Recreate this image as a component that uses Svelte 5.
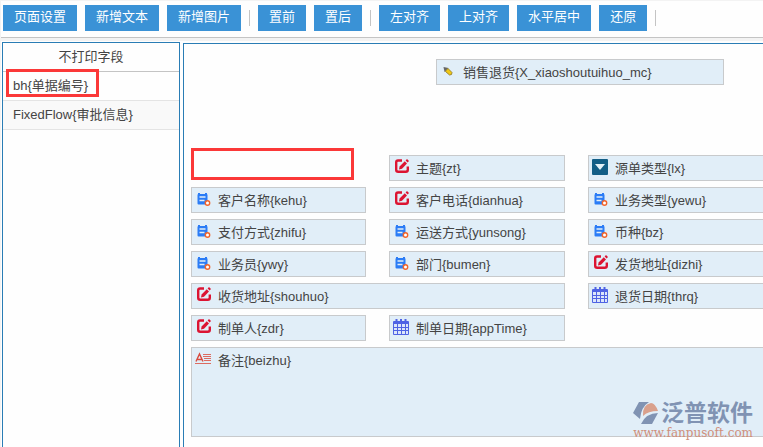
<script>
	const groups = [
		['页面设置', '新增文本', '新增图片'],
		['置前', '置后'],
		['左对齐', '上对齐', '水平居中', '还原'],
	];

	const hidden = [
		{ name: 'bh', label: '单据编号', marked: true },
		{ name: 'FixedFlow', label: '审批信息' },
	];

	const fields = [
		{ name: '', marked: true },
		{ name: 'zt', label: '主题', icon: 'edit' },
		{ name: 'lx', label: '源单类型', icon: 'select' },
		{ name: 'kehu', label: '客户名称', icon: 'link' },
		{ name: 'dianhua', label: '客户电话', icon: 'edit' },
		{ name: 'yewu', label: '业务类型', icon: 'link' },
		{ name: 'zhifu', label: '支付方式', icon: 'link' },
		{ name: 'yunsong', label: '运送方式', icon: 'link' },
		{ name: 'bz', label: '币种', icon: 'link' },
		{ name: 'ywy', label: '业务员', icon: 'link' },
		{ name: 'bumen', label: '部门', icon: 'link' },
		{ name: 'dizhi', label: '发货地址', icon: 'edit' },
		{ name: 'shouhuo', label: '收货地址', icon: 'edit', size: 'wide' },
		{ name: 'thrq', label: '退货日期', icon: 'date' },
		{ name: 'zdr', label: '制单人', icon: 'edit' },
		{ name: 'appTime', label: '制单日期', icon: 'date', size: 'last' },
		{ name: 'beizhu', label: '备注', icon: 'memo', size: 'memo' },
	];
</script>

{#snippet icon(type)}
	<svg class="icon" viewBox="0 0 16 16" aria-hidden="true">
		{#if type === 'edit'}
			<path d="M9 1.500H5Q3.200 1.500 3.200 3.200v7.600q0 2 2 2h7.600q2 0 2-2V7.500" fill="none" stroke="#dc1432" stroke-width="2.400" />
			<path d="M6 10.500l.6-3L11.800 2.300l2.200 2.200L9 9.700z" fill="#dc1432" />
			<path d="M12.600 1.500L14 .1l2 2-1.400 1.400z" fill="#dc1432" />
		{:else if type === 'link'}
			<rect x="2.500" y="3" width="10" height="10.500" rx="1" fill="#2b7cf6" />
			<path d="M4 2v2M11 2v2" stroke="#2b7cf6" stroke-width="2" />
			<path d="M4.500 6h6M4.500 9.500h5" stroke="#e1eef8" stroke-width="1.300" />
			<circle cx="12.500" cy="12" r="2.200" fill="#fff" stroke="#f2642b" stroke-width="1.400" />
		{:else if type === 'select'}
			<rect width="16" height="16" rx="1" fill="#135e86" />
			<path d="M3 5h10l-5 6z" fill="#e4f1f8" />
		{:else if type === 'date'}
			<rect x="0" y="2" width="16" height="14" rx="1" fill="#4f63e4" />
			<path d="M3.500 0v3M8 0v3M12.500 0v3" stroke="#4f63e4" stroke-width="2" />
			<path d="M1 5h3v3H1zM5 5h3v3H5zM9 5h3v3H9zM13 5h2v3h-2zM1 9h3v2H1zM5 9h3v2H5zM9 9h3v2H9zM13 9h2v2h-2zM1 12h3v3H1zM5 12h3v3H5zM9 12h3v3H9zM13 12h2v3h-2z" fill="#dce6fa" />
		{:else if type === 'memo'}
			<path d="M1 10.500L4.500 3 8 10.500M2.500 8.500h4" fill="none" stroke="#d94a3d" stroke-width="1.400" />
			<path d="M8 3.500h8M8 5.500h8M9 7.500h7M9 9.500h7M0 12.500h16" stroke="#dc6b60" stroke-width="1.200" />
		{:else}
			<path d="M3.500 4l5 1-4 4z" fill="#666" />
			<path d="M8 5.500L12 9.500l-.5 2-2 .5L5.300 8.300z" fill="#f0c814" stroke="#8a7320" stroke-width=".8" />
		{/if}
	</svg>
{/snippet}

<div class="page">
	<header class="toolbar">
		{#each groups as group}
			{#each group as text}
				<button type="button">{text}</button>
			{/each}
			<span class="sep"></span>
		{/each}
	</header>

	<div class="main">
		<aside class="sidebar">
			<h2>不打印字段</h2>
			<ul>
				{#each hidden as item}
					<li class:marked={item.marked}>{item.name}{'{'}{item.label}{'}'}</li>
				{/each}
			</ul>
		</aside>

		<main class="canvas">
			<div class="field title">{@render icon('tag')}销售退货{'{'}X_xiaoshoutuihuo_mc{'}'}</div>
			<div class="fields">
				{#each fields as f}
					{#if f.marked}
						<div class="empty"></div>
					{:else}
						<div class="field {f.size ?? ''}">{@render icon(f.icon)}{f.label}{'{'}{f.name}{'}'}</div>
					{/if}
				{/each}
			</div>

			<div class="watermark">
				<div class="brand">
					<svg viewBox="0 0 26 24" aria-hidden="true">
						<path d="M6 1h10Q8 6 7 18L0 12z" fill="#8093b3" />
						<path d="M10 15Q9 4 18 2q4 0 7 8Q15 10 10 15z" fill="#d9a08c" />
						<path d="M8 23Q13 12 25 12l-6 11z" fill="#8093b3" />
					</svg>
					<span>泛普软件</span>
				</div>
				<div class="url">www.fanpusoft.com</div>
			</div>
		</main>
	</div>
</div>

<style>
	:global(body) {
		margin: 0;
		background: #f3f3f3;
	}

	.page {
		display: flex;
		flex-direction: column;
		min-height: 100vh;
		overflow: hidden;
		font: 13px/20px "Liberation Sans", "Noto Sans CJK SC", sans-serif;
		color: #444;
	}

	.toolbar {
		display: flex;
		align-items: center;
		gap: 8px;
		margin: 1px 0 3px 1px;
		padding: 4px 2px 6px;
		background: #fefefe;
		border-bottom: 1px solid #c4c4c4;
	}

	button {
		flex: none;
		height: 26px;
		padding: 0 11px 2px;
		border: 0;
		background: #3a92d6;
		color: #fff;
		font: inherit;
		cursor: pointer;
	}

	.sep {
		width: 1px;
		height: 16px;
		background: #c4c4c4;
	}

	.main {
		display: flex;
		flex: 1;
		gap: 3px;
		margin-left: 1px;
		padding: 1px 0 0 1px;
		background: #fefefe;
	}

	.sidebar {
		flex: none;
		width: 176px;
		border: 1px solid #2a7db5;
		border-bottom: 0;
	}

	h2 {
		margin: 0;
		padding: 4px 0;
		border-bottom: 1px solid #c4c4c4;
		font-size: 13px;
		font-weight: normal;
		text-align: center;
	}

	ul {
		margin: 0;
		padding: 0;
		list-style: none;
	}

	li {
		position: relative;
		padding: 4px 10px;
		border-bottom: 1px solid #e4e4e4;
	}

	li:nth-child(even) {
		background: #f9f9f9;
	}

	.marked::after,
	.empty::after {
		position: absolute;
		box-sizing: border-box;
		border: 3px solid #fb3838;
		content: '';
	}

	.marked::after {
		top: -3px;
		left: 3px;
		width: 93px;
		height: 28px;
	}

	.empty {
		position: relative;
	}

	.empty::after {
		top: -7px;
		left: 0;
		width: 163px;
		height: 32px;
	}

	.canvas {
		position: relative;
		flex: 1;
		min-width: 0;
		margin-top: 1px;
		padding: 15px 0 10px 7px;
		border: 1px solid #2a7db5;
		border-right: 0;
		border-bottom: 0;
		overflow: hidden;
	}

	.field {
		display: flex;
		align-items: flex-start;
		gap: 7px;
		box-sizing: border-box;
		padding: 3px 3px 1px;
		border: 1px solid #c8cacc;
		background: #e1eef8;
		white-space: nowrap;
	}

	.title {
		width: 288px;
		margin: 0 0 70px 245px;
	}

	.fields {
		display: grid;
		grid-template-columns: 175px 176px 1fr;
		grid-auto-rows: minmax(26px, auto);
		gap: 6px 23px;
		margin-right: -1px;
	}

	.wide {
		grid-column: span 2;
	}

	.last {
		grid-column: 2;
	}

	.memo {
		grid-column: 1 / -1;
		min-height: 90px;
	}

	.icon {
		flex: none;
		width: 16px;
		height: 16px;
	}

	.watermark {
		display: flex;
		flex-direction: column;
		gap: 2px;
		position: absolute;
		right: 10px;
		bottom: 8px;
	}

	.brand {
		display: flex;
		align-items: center;
		gap: 2px;
		color: #8093b3;
		font-size: 23px;
		font-weight: bold;
		line-height: 24px;
	}

	.brand svg {
		width: 26px;
		height: 24px;
	}

	.url {
		color: #d08f7a;
		font: 12px/12px "DejaVu Serif", serif;
		text-align: right;
	}
</style>
